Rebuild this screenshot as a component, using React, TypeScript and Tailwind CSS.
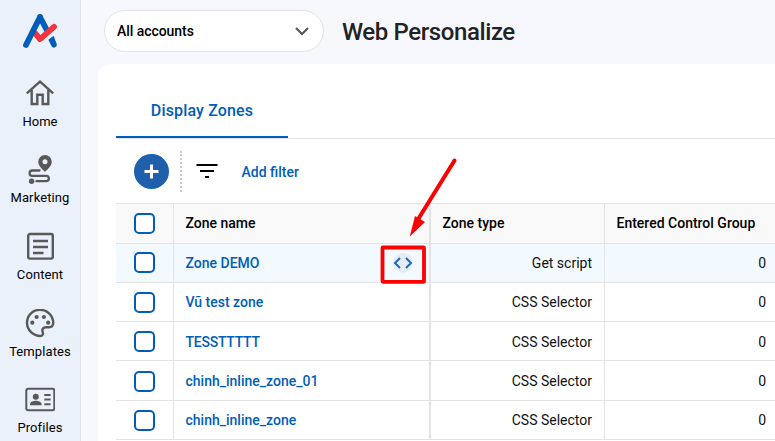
import type { ReactNode } from 'react';

const navItems: { label: string; icon: ReactNode; box: string; tracking: string }[] = [
  {
    label: 'Home',
    box: 'h-[76px]',
    tracking: 'tracking-normal',
    icon: (
      <svg width="30" height="30" viewBox="0 1 30 30" fill="none" stroke="#595959" strokeWidth="2.4">
        <path d="M1.8 15.400 15 3.600l13.200 11.800" />
        <path d="M6.700 12v14h5.600v-9.200h5.400V26h5.600V12" />
      </svg>
    ),
  },
  {
    label: 'Marketing',
    box: 'h-[77px]',
    tracking: 'tracking-[0.1px]',
    icon: (
      <svg width="30" height="30" viewBox="0 1 30 30" fill="none">
        <path fillRule="evenodd" fill="#595959" d="M20 1a6.800 6.800 0 0 0-6.800 6.800c0 4.200 4 7.200 6.800 10.200 2.800-3 6.800-6 6.800-10.200A6.800 6.800 0 0 0 20 1Zm0 4.300a2.500 2.500 0 1 1 0 5 2.500 2.500 0 0 1 0-5Z" />
        <path stroke="#595959" strokeWidth="2.300" strokeLinecap="round" d="M14.500 16.500H7.300a2.700 2.700 0 0 0 0 5.400h14.400a2.700 2.700 0 0 1 0 5.300H11.500" />
        <circle cx="6.600" cy="27.200" r="2.700" fill="#595959" />
      </svg>
    ),
  },
  {
    label: 'Content',
    box: 'h-[77px]',
    tracking: 'tracking-[0.1px]',
    icon: (
      <svg width="30" height="30" viewBox="0 1 30 30" fill="none" stroke="#595959" strokeWidth="2.400">
        <rect x="3.200" y="3" width="24.600" height="24.600" rx="1.800" />
        <path d="M8 10h15M8 16h15M8 22h10.500" />
      </svg>
    ),
  },
  {
    label: 'Templates',
    box: 'h-[76px]',
    tracking: 'tracking-[0.1px]',
    icon: (
      <svg width="30" height="30" viewBox="0 1 30 30" fill="none">
        <path stroke="#595959" strokeWidth="2.400" d="M15 1.800c-7.400 0-13 5.700-13 13 0 7.400 6.300 13.200 13.300 13.200 2.100 0 3.200-1.700 2.500-3.500-1.200-3 .2-5.200 3.400-5.200h2.900c2.500 0 4.100-1.800 4.100-4.500C28.200 7.500 22.200 1.800 15 1.800Z" />
        <g fill="#595959">
          <circle cx="7.300" cy="14.700" r="2.100" />
          <circle cx="11.600" cy="9" r="2.100" />
          <circle cx="18.900" cy="9" r="2.100" />
          <circle cx="23.200" cy="14.700" r="2.100" />
        </g>
      </svg>
    ),
  },
  {
    label: 'Profiles',
    box: 'h-[76px]',
    tracking: 'tracking-[0.1px]',
    icon: (
      <svg width="30" height="30" viewBox="0 0 30 30" fill="none">
        <rect x="1.300" y="3.700" width="28" height="21.600" rx="2" stroke="#595959" strokeWidth="2" />
        <circle cx="10.800" cy="11.700" r="3" fill="#595959" />
        <path fill="#595959" d="M5 20.300v-1.200c0-2.300 3.700-3.400 5.800-3.400s5.800 1.100 5.800 3.400v1.200Z" />
        <path stroke="#595959" strokeWidth="2" d="M19.300 10h6.300M19.300 14.600h6.300M19.300 19.200h6.300" />
      </svg>
    ),
  },
];

const rows = [
  { name: 'Zone DEMO', type: 'Get script', height: 'h-[39px]', check: 'pb-px', text: 'pt-0', tracking: 'tracking-normal', active: true },
  { name: 'Vũ test zone', type: 'CSS Selector', height: 'h-[39px]', check: 'pt-0', text: 'pt-0', tracking: 'tracking-normal' },
  { name: 'TESSTTTTT', type: 'CSS Selector', height: 'h-[39px]', check: 'pt-0', text: 'pt-[2px]', tracking: 'tracking-[-0.25px]' },
  { name: 'chinh_inline_zone_01', type: 'CSS Selector', height: 'h-[40px]', check: 'pt-[2px]', text: 'pt-[2px]', tracking: 'tracking-normal' },
  { name: 'chinh_inline_zone', type: 'CSS Selector', height: 'h-[39px]', check: 'pt-0', text: 'pt-0', tracking: 'tracking-normal' },
];

const columns = 'grid grid-cols-[58px_257px_174px_1fr]';

function Checkbox() {
  return <span className="block size-[21px] rounded-[5px] border-2 border-[#005eb8] bg-white" />;
}

function Sidebar() {
  return (
    <aside className="flex w-[81px] shrink-0 flex-col border-r border-[#e2e4e7] bg-[#eaf1fb]">
      <div className="flex h-[79px] shrink-0 justify-center pt-[13px]">
        <svg width="36" height="36" viewBox="0 0 36 36" fill="none" strokeLinecap="round" strokeLinejoin="round">
          <path d="M18 4 25 17.500" stroke="#005eb8" strokeWidth="5.800" />
          <path d="M26.400 26.800 31.600 22.700 34.700 30.900A2.850 2.850 0 0 1 29.600 33.300Z" fill="#005eb8" />
          <path d="m12.800 19.800 5.200 6.300L32 13.900" stroke="#f5333f" strokeWidth="5.800" />
          <path d="M4 32 18 4" stroke="#005eb8" strokeWidth="5.800" />
        </svg>
      </div>
      {navItems.map((item) => (
        <div key={item.label} className={`flex shrink-0 flex-col items-center ${item.box}`}>
          {item.icon}
          <span className={`mt-[5px] text-[13px] leading-4 font-normal text-black ${item.tracking}`}>{item.label}</span>
        </div>
      ))}
    </aside>
  );
}

function Toolbar() {
  return (
    <div className="flex h-[64px] items-center pl-[18px]">
      <button className="flex size-[35px] items-center justify-center rounded-full bg-[#1f5fac]">
        <svg width="15" height="15" viewBox="0 0 15 15" stroke="white" strokeWidth="3">
          <path d="M7.500.5v14M.5 7.500h14" />
        </svg>
      </button>
      <span className="ml-[11px] h-[41px] border-l-2 border-dotted border-[#cccccc]" />
      <svg className="ml-[14px]" width="22" height="16" viewBox="0 0 22 16" fill="black">
        <path d="M.5 1h21v2H.5zM4 7h14v2H4zM9 13h4v2H9z" />
      </svg>
      <span className="mt-[3px] ml-[23.5px] text-[14px] font-medium text-[#005eb8]">Add filter</span>
    </div>
  );
}

function ZoneTable() {
  return (
    <div className="border-t border-[#e3e3e3] text-[14px]">
      <div className={`${columns} h-[40px] border-b border-[#e3e3e3] bg-[#f9f9f9] font-medium text-black`}>
        <div className="flex items-center border-r border-[#e3e3e3] pl-[18px]"><Checkbox /></div>
        <div className="flex items-center border-r-2 border-[#e3e3e3] pl-[11.500px]">Zone name</div>
        <div className="flex items-center border-r border-[#e3e3e3] pl-[11.500px]">Zone type</div>
        <div className="flex items-center pl-[11.500px]">Entered Control Group</div>
      </div>
      {rows.map((row) => (
        <div key={row.name} className={`${columns} ${row.height} border-b border-[#e3e3e3] ${row.active ? 'bg-[#f2f9ff]' : 'bg-white'}`}>
          <div className={`flex items-center border-r border-[#e3e3e3] pl-[18px] ${row.check}`}><Checkbox /></div>
          <div className={`flex items-center justify-between border-r-2 border-[#e3e3e3] pr-[16px] pl-[11.500px] font-medium text-[#005eb8] ${row.text} ${row.tracking}`}>
            {row.name}
            {row.active && (
              <span className="flex size-5 items-center justify-center rounded-full bg-[#e7edf6]">
                <svg className="shrink-0" width="20" height="12" viewBox="0 0 20 12" fill="none" stroke="#1f69b8" strokeWidth="2">
                  <path d="M7 1 2 6l5 5M13 1l5 5-5 5" />
                </svg>
              </span>
            )}
          </div>
          <div className={`flex items-center justify-end border-r border-[#e3e3e3] pr-[12px] text-[#111] ${row.text}`}>{row.type}</div>
          <div className={`flex items-center justify-end pr-[9px] text-[#111] ${row.text}`}>0</div>
        </div>
      ))}
    </div>
  );
}

function Callout() {
  return (
    <svg className="pointer-events-none absolute top-[155px] left-[378px]" width="84" height="132" viewBox="0 0 84 132" fill="none">
      <rect x="4.500" y="92.500" width="41.500" height="34.300" rx=".5" stroke="#ff0000" strokeWidth="3.800" />
      <path d="M76.500 5.500 39 66" stroke="#ff0000" strokeWidth="4" strokeLinecap="round" />
      <path d="M31.800 81.500 37 61 47 67Z" fill="#ff0000" />
    </svg>
  );
}

export default function App() {
  return (
    <div className="relative flex h-[441px] w-[775px] overflow-hidden bg-[#f7f8fd] font-[Roboto,sans-serif] antialiased">
      <Sidebar />
      <main className="flex min-w-0 flex-1 flex-col pl-[17px]">
        <header className="flex h-[64px] shrink-0 items-start pt-[10px] pl-[6px]">
          <div className="flex h-[42px] w-[220px] items-center justify-between rounded-full border border-[#e3e3e3] bg-white pr-[14px] pl-3">
            <span className="text-[14px] font-medium tracking-[-0.05px] text-black">All accounts</span>
            <svg width="14" height="9" viewBox="0 0 14 9" fill="none" stroke="#595959" strokeWidth="2.200">
              <path d="m1 1 6 6 6-6" />
            </svg>
          </div>
          <h1 className="ml-[18px] text-[24px] leading-[44px] font-medium tracking-[-0.4px] text-[#222]">Web Personalize</h1>
        </header>
        <section className="flex-1 rounded-tl-xl bg-white pt-[18px] pl-[18px]">
          <div className="flex h-[57px] border-b border-[#e3e3e3]">
            <div className="flex w-[172px] items-center justify-center border-b-2 border-[#005eb8] pt-[3px] text-[16px] font-medium tracking-[0.15px] text-[#005eb8]">
              Display Zones
            </div>
          </div>
          <Toolbar />
          <ZoneTable />
        </section>
      </main>
      <Callout />
    </div>
  );
}
